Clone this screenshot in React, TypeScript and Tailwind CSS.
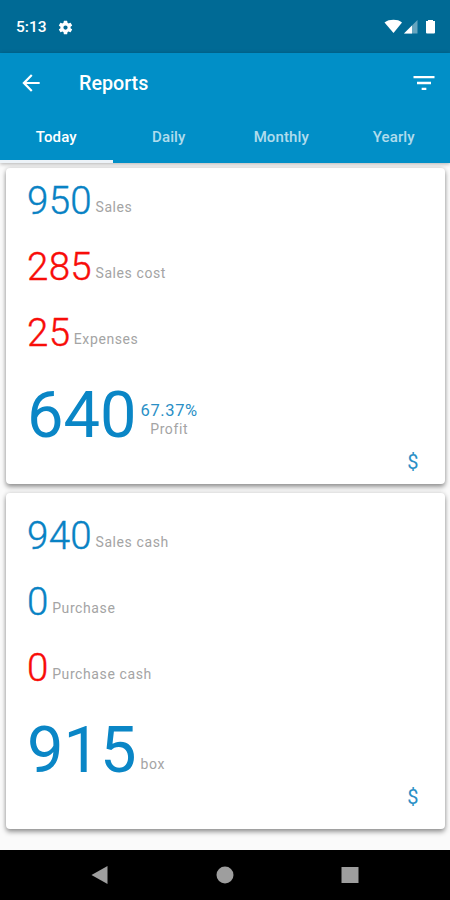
import type { ReactNode } from 'react';

type Entry = { value: string; label: string; red?: boolean };

function Row({ value, label, red }: Entry) {
  return (
    <div className="flex h-[66px] items-end">
      <span className={`text-[38.5px] leading-[66px] font-light tracking-[0.3px] [-webkit-text-stroke:0.4px] ${red ? 'text-[#f80c08]' : 'text-[#0882c4]'}`}>{value}</span>
      <span className="mb-[18px] ml-[3.5px] text-[14px] leading-[18px] tracking-[0.6px] text-[#a4a4a4]">{label}</span>
    </div>
  );
}

function Card({ rows, total, children, className }: { rows: Entry[]; total: string; children: ReactNode; className: string }) {
  return (
    <section
      className={`mx-[5.5px] shrink-0 rounded-[4px] bg-white pl-[21.5px] shadow-[0_3px_5px_rgba(0,0,0,0.38),0_0_4px_rgba(0,0,0,0.14)] ${className}`}
    >
      {rows.map((row) => (
        <Row key={row.label} {...row} />
      ))}
      <div className="flex h-[98px] items-end">
        <span className="text-[65px] leading-[98px] text-[#0a86c6]">{total}</span>
        {children}
        <span className="mr-[26px] mb-[-10px] ml-auto text-[20px] leading-[24px] text-[#2a8fc6]">$</span>
      </div>
    </section>
  );
}

const tabs = ['Today', 'Daily', 'Monthly', 'Yearly'];

export default function App() {
  return (
    <div className="flex h-[900px] w-[450px] flex-col overflow-hidden bg-[#fafafa] font-[Roboto,sans-serif]">
      <div className="flex h-[53px] shrink-0 items-center bg-[#006a95] pt-[1px] pl-[16px] text-white">
        <span className="w-[41px] pt-[2px] text-[15.5px] font-medium">5:13</span>
        <svg width="17" height="17" viewBox="0 0 24 24" fill="currentColor">
          <path d="M19.14 12.94c.04-.3.06-.61.06-.94s-.02-.64-.07-.94l2.03-1.58a.5.5 0 0 0 .12-.61l-1.92-3.32a.49.49 0 0 0-.59-.22l-2.39.96a7 7 0 0 0-1.62-.94l-.36-2.54a.48.48 0 0 0-.48-.41h-3.84a.47.47 0 0 0-.47.41l-.36 2.54c-.59.24-1.13.57-1.62.94l-2.39-.96a.48.48 0 0 0-.59.22L2.74 8.87a.47.47 0 0 0 .12.61l2.03 1.58a5.9 5.9 0 0 0 0 1.88l-2.03 1.58a.5.5 0 0 0-.12.61l1.92 3.32c.12.22.37.29.59.22l2.39-.96c.5.38 1.03.7 1.62.94l.36 2.54c.05.24.24.41.48.41h3.84c.24 0 .44-.17.47-.41l.36-2.54a6.7 6.7 0 0 0 1.62-.94l2.39.96c.22.08.47 0 .59-.22l1.92-3.32a.47.47 0 0 0-.12-.61zM12 15a3 3 0 1 1 0-6 3 3 0 0 1 0 6z" />
        </svg>
        <svg className="mr-[14px] ml-auto" width="52" height="16" viewBox="0 0 52 16" fill="currentColor">
          <path d="M.5 3.500C3 1.500 6 .8 9.500.8S15.500 1.500 18 3.500L9.500 14z" />
          <path d="M33.500 1v13.500H20z" opacity=".4" />
          <path d="M28 6.500v8h-8z" />
          <path d="M42 2h2V1h5v1h2v11.500q0 1-1 1h-7q-1 0-1-1z" />
        </svg>
      </div>
      <header className="relative z-10 h-[110px] shrink-0 bg-[#018fc7] text-white shadow-[0_1px_4px_rgba(0,0,0,0.3)]">
        <div className="flex h-[60px] items-center">
          <svg className="ml-[18px]" width="26" height="26" viewBox="0 0 24 24" fill="currentColor">
            <path d="M20 11H7.830l5.590-5.590L12 4l-8 8 8 8 1.410-1.410L7.830 13H20z" />
          </svg>
          <h1 className="ml-[35px] pt-[2px] text-[19.7px] font-medium">Reports</h1>
          <svg className="mr-[12px] ml-auto" width="28" height="28" viewBox="0 0 24 24" fill="currentColor">
            <path d="M3 6h18v2H3zM6 11h12v2H6zM10 16h4v2h-4z" />
          </svg>
        </div>
        <nav className="grid h-[50px] grid-cols-4 text-[15px] font-medium">
          {tabs.map((tab, i) => (
            <span key={tab} className={`flex items-center justify-center border-b-[3px] pt-[2px] tracking-[0.1px] ${i === 0 ? 'border-[#edf3f8]' : 'border-transparent text-white/70'}`}>
              {tab}
            </span>
          ))}
        </nav>
      </header>
      <main className="flex h-[687px] shrink-0 flex-col gap-[9px] pt-[5px]">
        <Card
          className="h-[316px]"
          rows={[{ value: '950', label: 'Sales' }, { value: '285', label: 'Sales cost', red: true }, { value: '25', label: 'Expenses', red: true }]}
          total="640"
        >
          <span className="mb-[25px] ml-[4px] flex flex-col items-center text-[14px] leading-[19px] tracking-[0.6px]">
            <span className="text-[16.5px] text-[#2a8fc6]">67.37%</span>
            <span className="text-[#a4a4a4]">Profit</span>
          </span>
        </Card>
        <Card
          className="h-[336px] pt-[10px]"
          rows={[{ value: '940', label: 'Sales cash' }, { value: '0', label: 'Purchase' }, { value: '0', label: 'Purchase cash', red: true }]}
          total="915"
        >
          <span className="mb-[26px] ml-[4px] text-[14px] leading-[18px] tracking-[0.6px] text-[#a4a4a4]">box</span>
        </Card>
      </main>
      <footer className="flex h-[50px] shrink-0 items-center bg-black text-[#9e9e9e]">
        <svg width="450" height="50" viewBox="0 0 450 50" fill="currentColor">
          <path d="M91.500 25 107.500 16v18z" />
          <circle cx="225" cy="25" r="8.500" />
          <path d="M341.500 17h17v16h-17z" />
        </svg>
      </footer>
    </div>
  );
}
